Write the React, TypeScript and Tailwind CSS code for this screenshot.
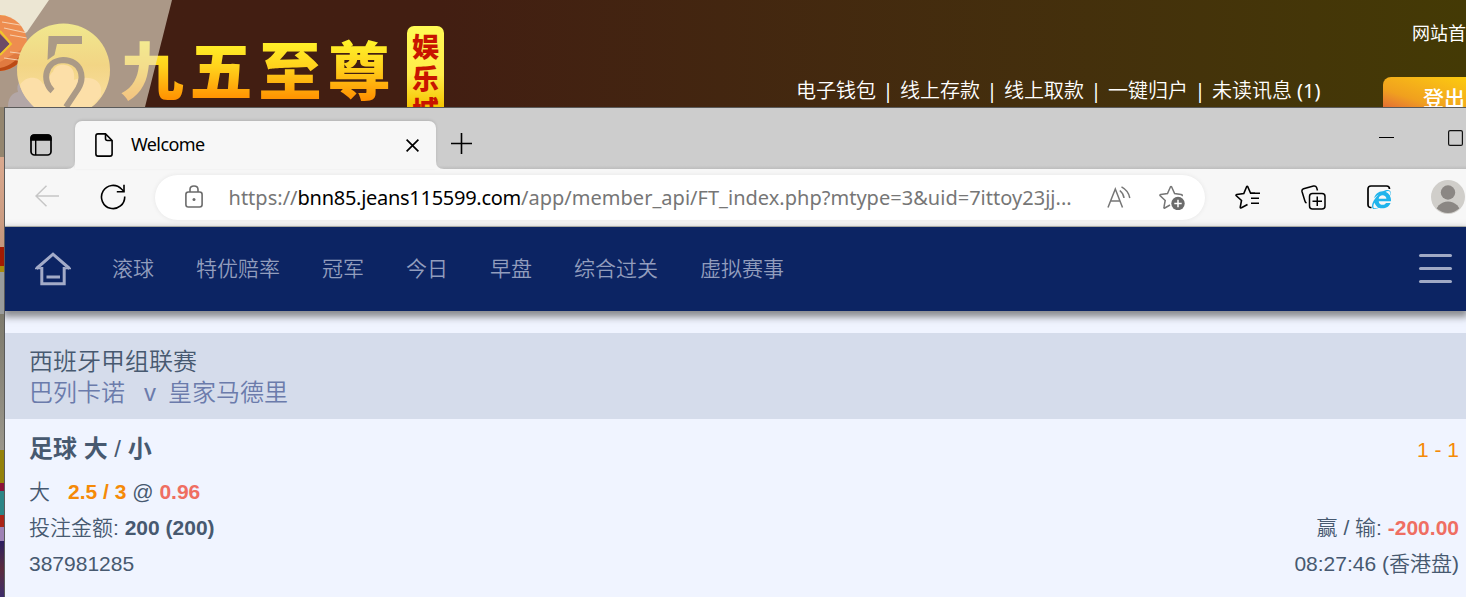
import { FaInternetExplorer } from "react-icons/fa";

interface BetLine {
  label: string;
  value: string;
}

const accountLinks: string[] = ["电子钱包", "线上存款", "线上取款", "一键归户", "未读讯息"];

const sportLinks: string[] = ["滚球", "特优赔率", "冠军", "今日", "早盘", "综合过关", "虚拟赛事"];

const stake: BetLine = { label: "投注金额: ", value: "200 (200)" };
const result: BetLine = { label: "赢 / 输: ", value: "-200.00" };

function Logo() {
  return (
    <svg width="460" height="107" viewBox="0 0 460 107" className="shrink-0">
      <defs>
        <linearGradient id="gold" x1="0" y1="40" x2="0" y2="100" gradientUnits="userSpaceOnUse">
          <stop offset="0" stopColor="#fff42a" />
          <stop offset="0.45" stopColor="#ffd21c" />
          <stop offset="1" stopColor="#ff9000" />
        </linearGradient>
        <linearGradient id="coin" x1="0" y1="23" x2="0" y2="107" gradientUnits="userSpaceOnUse">
          <stop offset="0" stopColor="#f0e88e" />
          <stop offset="0.5" stopColor="#f2d585" />
          <stop offset="1" stopColor="#fbdfa2" />
        </linearGradient>
        <linearGradient id="badge" x1="0" y1="26" x2="0" y2="107" gradientUnits="userSpaceOnUse">
          <stop offset="0" stopColor="#fffb55" />
          <stop offset="0.6" stopColor="#ffec4a" />
          <stop offset="1" stopColor="#f5c400" />
        </linearGradient>
        <clipPath id="ball">
          <circle cx="-1" cy="43" r="28" />
        </clipPath>
      </defs>

      <g
        fontFamily="'Noto Sans CJK SC', sans-serif"
        fontWeight="900"
        fontSize="63"
        textAnchor="middle"
        fill="url(#gold)"
      >
        <text x="152" y="94">九</text>
        <text x="221" y="94">五</text>
        <text x="290" y="94">至</text>
        <text x="359" y="94">尊</text>
      </g>

      {/* pale corner, laid over the first character */}
      <path d="M0 0H172L145 107H0Z" fill="#ebe3d0" fillOpacity="0.62" />
      <path d="M0 0H49L27 32L0 50Z" fill="#ece6d3" />
      <g clipPath="url(#ball)">
        <rect width="28" height="75" y="8" fill="#ee8d4f" />
        <path d="M0 62L28 46V75H0Z" fill="#e07a40" />
        <path d="M0 71C14 68 22 60 27 50" stroke="#bb4a14" strokeWidth="6" fill="none" />
        <path d="M2 22L26 26M4 28L27 33M10 35L27 38M10 52L26 54M4 58L25 61" stroke="#f6cfae" strokeWidth="1.2" />
        <path d="M0 9H13L11 16L0 15Z" fill="#f3df55" />
        <path d="M0 34L10 44L0 54Z" fill="#6d4a66" />
        <path d="M0 31L11 44L0 55" stroke="#f0c72c" strokeWidth="2" fill="none" />
      </g>

      <path d="M8 107C8 98 12 93 18 92C15 82 24 75 32 79C42 76 52 80 53 90L60 107Z" fill="#b3a7a7" />
      <circle cx="63.500" cy="70" r="46.500" fill="url(#coin)" />
      <path
        d="M20 85C25 76 38 75 43 84C48 84 50 72 53 72C54 66 60 64 65 65C72 66 75 71 74 80C84 76 99 77 101 88V96L90 107H34C28 101 22 94 20 85Z"
        fill="#fcdfa8"
      />
      <path d="M48.500 36H82V44H57L54.500 55L47.500 60Z" fill="#ab9a86" />
      <path
        d="M52.500 91C42 82 44 61 63 60C82 61 85 77 78 89L66 107"
        fill="none"
        stroke="#ab9a86"
        strokeWidth="6"
      />

      <rect x="407" y="26" width="37" height="95" rx="7" fill="url(#badge)" />
      <g
        fontFamily="'Noto Sans CJK SC', sans-serif"
        fontWeight="900"
        fontSize="27"
        textAnchor="middle"
        fill="#c81400"
      >
        <text x="425.500" y="57">娱</text>
        <text x="425.500" y="89">乐</text>
        <text x="425.500" y="121">城</text>
      </g>
    </svg>
  );
}

function SiteHeader() {
  return (
    <header className="flex h-[107px] w-full overflow-hidden bg-linear-to-r from-[#421e12] from-30% to-[#443a05] text-white">
      <Logo />
      <nav className="mt-[76px] ml-[336px] flex h-[30px] shrink-0 items-center text-[20px] leading-[30px] font-[350] whitespace-nowrap">
        {accountLinks.map((val: string, id: number) => (
          <div key={id} className="flex">
            {id > 0 && <span className="w-6 text-center font-normal">|</span>}
            <a>{val}</a>
          </div>
        ))}
        <span className="ml-[5px] font-normal">(1)</span>
      </nav>
      <div className="ml-auto w-[83px] shrink-0 overflow-hidden whitespace-nowrap">
        <div className="mt-5 ml-[29px] text-[18px] leading-[27px] font-normal">网站首页</div>
        <div className="mt-[30px] h-[40px] w-[120px] rounded-tl-[8px] bg-linear-to-tr from-[#d94f35] via-[#f0a01e] via-35% to-[#ffd800] pt-[6px] pl-[40px] text-[21px] leading-[30px] font-medium">
          登出
        </div>
      </div>
    </header>
  );
}

function TabStrip() {
  return (
    <div className="flex h-[61px] items-end bg-[#cdcdcd] bg-linear-to-b from-transparent from-94% to-[#bdbdbd]">
      <svg width="22" height="22" viewBox="0 0 22 22" className="mb-[13px] ml-[25px]">
        <rect x="1" y="1" width="20" height="20" rx="3.500" fill="none" stroke="#000" strokeWidth="1.700" />
        <path d="M1 6V4Q1 1 4 1H18Q21 1 21 4V6ZM5.700 6V21" stroke="#000" strokeWidth="1.400" />
      </svg>
      <svg width="8" height="8" viewBox="0 0 8 8" className="ml-[15px]">
        <path d="M8 0V8H0Q8 8 8 0Z" fill="#f7f7f7" />
      </svg>
      <div className="flex h-12 w-[361px] items-center rounded-t-[7px] bg-[#f7f7f7] pr-[17px] pl-[20px] shadow-[0_-1px_3px_rgba(0,0,0,0.12)]">
        <svg width="18" height="24" viewBox="0 0 18 24" fill="none" stroke="#000" strokeWidth="1.600">
          <path d="M3 .9H10.500L17.100 7.500V21Q17.100 23.100 15 23.100H3Q.9 23.100 .9 21V3Q.9 .9 3 .9Z" />
          <path d="M10.500 1V5.500Q10.500 7.500 12.500 7.500H17" />
        </svg>
        <span className="mb-0.5 ml-[18px] text-[18px] tracking-[-0.6px] text-black">Welcome</span>
        <svg width="13" height="13" viewBox="0 0 13 13" className="ml-auto" stroke="#000" strokeWidth="1.700">
          <path d="M.6 .6L12.400 12.400M12.400 .6L.6 12.400" />
        </svg>
      </div>
      <svg width="8" height="8" viewBox="0 0 8 8">
        <path d="M0 0V8H8Q0 8 0 0Z" fill="#f7f7f7" />
      </svg>
      <svg width="21" height="21" viewBox="0 0 21 21" className="mb-[15px] ml-[7px]" stroke="#000" strokeWidth="1.600">
        <path d="M10.500 0V21M0 10.500H21" />
      </svg>
      <svg width="15" height="16" viewBox="0 0 15 16" className="mb-[23px] ml-auto" stroke="#000" strokeWidth="1">
        <path d="M0 7.500H15" />
      </svg>
      <svg width="15" height="16" viewBox="0 0 15 16" className="mr-[3px] mb-[23px] ml-[54px]" fill="none" stroke="#111" strokeWidth="1.200">
        <rect x=".6" y=".6" width="13.800" height="14.800" rx="1.500" />
      </svg>
    </div>
  );
}

function Toolbar() {
  return (
    <div className="flex h-[58px] items-center border-b border-[#b9bbb5] bg-[#f7f7f7]">
      <svg width="24" height="22" viewBox="0 0 24 22" className="mb-1 ml-[30px] shrink-0" fill="none" stroke="#c6c6c6" strokeWidth="1.500">
        <path d="M11.500 .8L1 11L11.500 21.200M1 11H24" />
      </svg>
      <svg width="26" height="26" viewBox="0 0 26 26" className="mb-0.5 ml-[41px] shrink-0" fill="none" stroke="#000" strokeWidth="1.600">
        <path d="M24.700 12.500A11.600 11.600 0 1 1 21.500 5L24 7.500" />
        <path d="M24 .8V7.700H16.800" />
      </svg>
      <div className="ml-[29px] flex h-[45px] w-[1050px] shrink-0 items-center rounded-full bg-white pr-[20px] pl-[30px] shadow-[0_0_5px_rgba(0,0,0,0.07)]">
        <svg width="18" height="23" viewBox="0 0 18 23" className="mb-0.5" fill="none" stroke="#6b6b6b" strokeWidth="1.600">
          <rect x=".9" y="7" width="16.200" height="15" rx="2.500" />
          <path d="M5 7V4.500Q5 1 9 1T13 4.500V7" />
          <circle cx="9" cy="14.500" r="1.500" fill="#6b6b6b" stroke="none" />
        </svg>
        <span className="ml-[25.5px] w-[850px] text-[20px] tracking-[0.02px] whitespace-nowrap text-[#767676]">
          https://<span className="tracking-[-0.28px] text-black">bnn85.jeans115599.com</span>
          /app/member_api/FT_index.php?mtype=3&amp;uid=7ittoy23jj...
        </span>
        <svg width="24" height="22" viewBox="0 0 24 22" className="mb-0.5 ml-auto" fill="none" stroke="#767676" strokeWidth="1.500">
          <path d="M1 21.500L8.300 3L15.500 21.500M3.500 15H13" />
          <path d="M12.800 4.500Q16.500 7.500 17 12M14.500 .8Q21.500 4.500 22.800 12" />
        </svg>
        <svg width="26" height="25" viewBox="0 0 26 25" className="ml-[28px]" fill="none" stroke="#767676" strokeWidth="1.500">
          <path d="M11 20L5.800 23Q4.600 23.500 5 22L6.200 15.500L1.200 10.800Q.4 9.800 1.800 9.500L8.500 8.500L11.400 2Q12 1 12.700 2L15.600 8.500L22 9.500Q24 9.800 22.800 11" />
          <circle cx="19" cy="18.500" r="6.700" fill="#6b6b6b" stroke="none" />
          <path d="M19 14.800V22.200M15.300 18.500H22.700" stroke="#fff" />
        </svg>
      </div>
      <svg width="25" height="24" viewBox="0 0 25 24" className="mb-0.5 ml-[30px] shrink-0" fill="none" stroke="#000" strokeWidth="1.600">
        <path d="M12.500 19.500L6.500 22.800Q5 23.300 5.300 21.800L6.500 15.500L1.300 10.800Q.5 9.900 1.800 9.500L8.800 8.500L11.500 2Q12.200 .8 12.900 2L15.600 8.200H20" />
        <path d="M16 8.300H25M16 13.300H24M16 18.300H24" />
      </svg>
      <svg width="25" height="25" viewBox="0 0 25 25" className="ml-[41px] shrink-0" fill="none" stroke="#000" strokeWidth="1.500">
        <rect x="8.500" y="8.500" width="15.500" height="15.500" rx="3" />
        <path d="M16.250 11.500V21M11.500 16.250H21M5.500 18Q4.300 17.300 3.900 16L1 6.500Q.6 4.400 2.600 3.700L12.500 1Q14.800 .5 15.600 2.500L16.500 5.500" />
      </svg>
      <div className="relative mb-0.5 ml-[41px] h-[24px] w-[24px] shrink-0">
        <svg width="24" height="24" viewBox="0 0 24 24" fill="none" stroke="#000" strokeWidth="1.700">
          <path d="M4.500 22.500H4Q1 22.500 1 19.500V4Q1 1 4 1H19.500Q22.500 1 22.500 4" />
        </svg>
        <FaInternetExplorer className="absolute top-[5px] left-[5px] text-[19px] text-[#1fb4ec]" />
      </div>
      <svg width="34" height="34" viewBox="0 0 34 34" className="mb-0.5 ml-[40px] shrink-0">
        <defs>
          <clipPath id="avatar">
            <circle cx="17" cy="17" r="16" />
          </clipPath>
        </defs>
        <circle cx="17" cy="17" r="17" fill="#d0ceca" />
        <g fill="#8b8784" clipPath="url(#avatar)">
          <circle cx="17" cy="12.500" r="7.200" />
          <circle cx="17" cy="34.500" r="13" />
        </g>
      </svg>
    </div>
  );
}

function SportNav() {
  return (
    <nav className="relative flex h-[84px] items-center bg-[#0c2463] pr-[14px] pl-[30px] shadow-[0_4px_7px_2px_rgba(70,70,70,0.6)]">
      <svg width="36" height="34" viewBox="0 0 36 34" fill="none" stroke="#a3abc8" strokeWidth="3">
        <path d="M1.500 16.500L18 2.200L34.500 16.500" />
        <path d="M0 16.500H7M29 16.500H36" strokeWidth="1.500" />
        <path d="M6.800 15V31.800H29.200V15M11.500 25H25" />
      </svg>
      <div className="ml-[41px] flex gap-[42px] text-[21px] font-[350] text-[#929dbd]">
        {sportLinks.map((val: string, id: number) => (
          <a key={id}>{val}</a>
        ))}
      </div>
      <div className="mb-px ml-auto flex flex-col gap-[10px]">
        <span className="h-[3px] w-[33px] rounded-full bg-[#a0a9c5]"></span>
        <span className="h-[3px] w-[33px] rounded-full bg-[#a0a9c5]"></span>
        <span className="h-[3px] w-[33px] rounded-full bg-[#a0a9c5]"></span>
      </div>
    </nav>
  );
}

function BetSlip() {
  return (
    <section className="font-['Liberation_Sans','Noto_Sans_CJK_SC',sans-serif] font-[350] text-[#475970]">
      {/* match title */}
      <div className="mt-[22px] h-[86px] bg-[#d5dceb] pt-[13px] pl-[24px] text-[24px] leading-[31px]">
        <div>西班牙甲组联赛</div>
        <div className="flex text-[#6b7bab]">
          <span>巴列卡诺</span>
          <span className="mr-[12px] ml-[19px]">v</span>
          <span>皇家马德里</span>
        </div>
      </div>

      {/* bet details */}
      <div className="flex flex-col pt-3 pr-[7px] pl-[24px] text-[21px] leading-[36px]">
        <div className="flex justify-between">
          <h2 className="text-[24px] font-bold">
            足球 大 <span className="font-normal">/</span> 小
          </h2>
          <span className="mt-px text-[#f58a07]">1 - 1</span>
        </div>
        <div className="mt-[6px]">
          <span className="mr-[18px]">大</span>
          <b className="font-bold text-[#f58a07]">2.5 / 3</b> @ <b className="font-bold text-[#ef6e62]">0.96</b>
        </div>
        <div className="flex justify-between whitespace-pre">
          <span>
            {stake.label}
            <b className="font-bold">{stake.value}</b>
          </span>
          <span>
            {result.label}
            <b className="font-bold text-[#ef6e62]">{result.value}</b>
          </span>
        </div>
        <div className="flex justify-between">
          <span>387981285</span>
          <span>08:27:46 (香港盘)</span>
        </div>
      </div>
    </section>
  );
}

export default function App() {
  return (
    <div className="flex h-[597px] w-[1466px] flex-col overflow-hidden font-['Noto_Sans','Noto_Sans_CJK_SC',sans-serif]">
      <SiteHeader />
      <div className="flex flex-1">
        {/* artwork showing past the window edge */}
        <div className="flex w-1 shrink-0 flex-col">
          <div className="h-[50px] bg-[#94866f]"></div>
          <div className="h-[90px] bg-linear-to-b from-[#dba98e] to-[#c4977d]"></div>
          <div className="h-[19px] bg-[#a31b02]"></div>
          <div className="h-[6px] bg-[#a98b0c]"></div>
          <div className="h-[42px] bg-[#999c9c]"></div>
          <div className="h-[136px] bg-linear-to-b from-[#7d7a6c] to-[#9a968b]"></div>
          <div className="h-[33px] bg-[#94810a]"></div>
          <div className="h-[8px] bg-[#8c1238]"></div>
          <div className="h-[24px] bg-[#2c8586]"></div>
          <div className="h-[12px] bg-[#ab2416]"></div>
          <div className="h-[14px] bg-[#9f82b5]"></div>
          <div className="flex-1 bg-linear-to-b from-[#2c1c60] via-[#5b2a3c] to-[#3d2b6b]"></div>
        </div>
        <main className="min-w-0 flex-1 overflow-hidden border-t border-l border-[#5a5a5a] bg-[#f0f4ff]">
          <TabStrip />
          <Toolbar />
          <SportNav />
          <BetSlip />
        </main>
      </div>
    </div>
  );
}
